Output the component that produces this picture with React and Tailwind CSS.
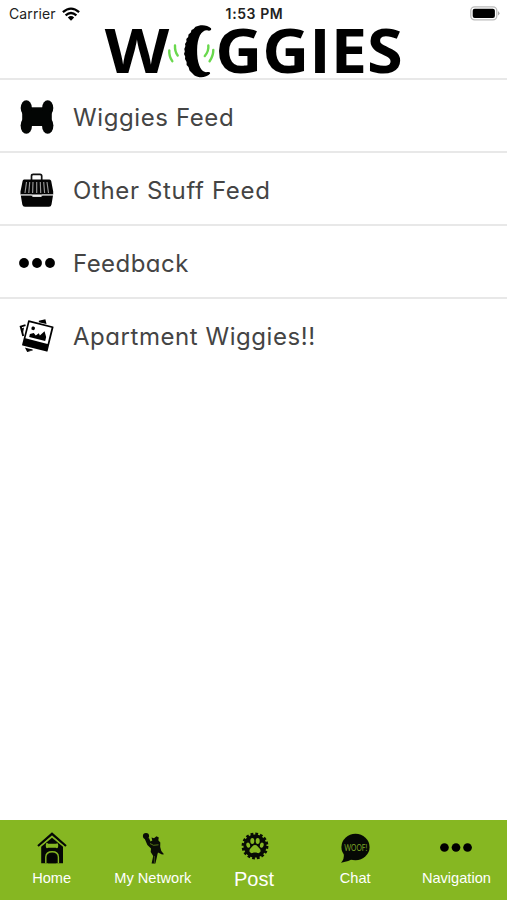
const BoneIcon = () => (
  <svg viewBox="0 0 34 34" className="w-[34px] h-[34px]" fill="#030504">
    <rect x="5" y="7.3" width="24" height="18.7" />
    <ellipse cx="6.3" cy="8" rx="5.6" ry="7.8" />
    <ellipse cx="27.7" cy="8" rx="5.6" ry="7.8" />
    <ellipse cx="6.3" cy="25.6" rx="5.7" ry="8.2" />
    <ellipse cx="27.7" cy="25.6" rx="5.7" ry="8.2" />
    <rect x="2.2" y="11" width="29.6" height="11" rx="3" />
  </svg>
);

const CrateIcon = () => (
  <svg viewBox="0 0 34 34" className="w-[34px] h-[34px]">
    <path d="M11.5 7V3Q11.5 1.3 13.2 1.3H20Q21.7 1.3 21.7 3V7" fill="none" stroke="#111" strokeWidth="1.7" />
    <path d="M4 6.5H29.5Q30.8 6.5 31.2 8L33.2 18.5V21.5H0.5V18.5L2.6 8Q2.9 6.5 4 6.5Z" fill="#050505" />
    <path
      d="M6.5 9L5 20M9.7 9L8.8 20M13 9L12.6 20M16.7 9V20M20.3 9L20.7 20M23.7 9L24.6 20M27 9L28.5 20"
      stroke="#999"
      strokeWidth="1.15"
    />
    <path d="M0.8 22.5H11.5L13 24H21L22.5 22.5H33L31.5 31.5Q31.1 33.7 29 33.7H5Q2.7 33.7 2.3 31.5Z" fill="#050505" />
    <path d="M1 21.7H11.5L13 23.2H20.7L22.2 21.7H33" fill="none" stroke="#bbb" strokeWidth="0.9" />
  </svg>
);

const DotsIcon = ({ className }) => (
  <svg viewBox="0 0 36 10" className={className}>
    <circle cx="5" cy="5" r="4.9" />
    <circle cx="18" cy="5" r="4.9" />
    <circle cx="31" cy="5" r="4.9" />
  </svg>
);

const PhotosIcon = () => (
  <svg viewBox="0 0 36 34" className="w-9 h-[34px]">
    <path d="M6.5 6.2L1.7 7.6L4.2 17" fill="none" stroke="#000" strokeWidth="1.9" />
    <path d="M20 2.6L25.8 1.1L26.5 4Z" stroke="#000" strokeWidth="1.5" />
    <path d="M2.6 9.5L5 8.6L4 14Z" />
    <path d="M7 29.5L13.5 31L8.5 32.3Z" stroke="#000" strokeWidth="1.2" />
    <g transform="translate(9.2 1.2) rotate(14)">
      <rect width="26.3" height="26" rx="0.7" />
      <rect x="1.7" y="1.7" width="22.8" height="16.6" fill="#fff" />
      <circle cx="6.8" cy="6.7" r="1.8" />
      <path d="M5 16V13L8.5 11L11 13L13.5 10L15 12L18.5 6.7L21.5 12V16Z" />
    </g>
  </svg>
);

const HomeIcon = () => (
  <svg viewBox="0 0 30 32" className="w-[30px] h-8">
    <path d="M1 14L15 1.8L29 14" fill="none" stroke="#050805" strokeWidth="2.2" />
    <path d="M4.2 14.7L15 5.8L26 14.7V31.3H4.2Z" fill="#050805" />
    <path d="M2.5 15L15 4.3L27.5 15" fill="none" stroke="#86b722" strokeWidth="0.8" />
    <path
      d="M10.8 11.2Q9 10.5 9 12Q8.5 13.7 9 15.3Q9.6 17 11.2 15.8H18.8Q20.4 17 21 15.3Q21.5 13.7 21 12Q20.4 10.5 19 11.8H11.2Z"
      fill="#86b722"
    />
    <path d="M8.8 31.3V25Q9 19.7 15.2 19.7Q21.2 19.7 21.4 25V31.3" fill="none" stroke="#86b722" strokeWidth="1.4" />
    <path d="M11 31.3V28Q10.4 26.5 11.2 25Q12 22.7 15 22.7Q18.3 22.7 19 25Q19.8 26.5 19.2 28V31.3Z" fill="#030503" />
  </svg>
);

const PersonIcon = () => (
  <svg viewBox="0 0 22 32" className="w-[22px] h-8" fill="#0a0d06">
    <circle cx="4" cy="4.1" r="3.1" />
    <path d="M2.8 7L7 6L8.5 9.6L10.3 8.5L9.5 5.6L12 6.2L14.5 4.3L16.8 5.6L16.3 8.3L18.3 10.6L18.2 15L19.3 19L22 22.3L20 22.6L16 20.5L15.4 22.5L14.8 25.5L13.4 31.4H9.6L11.2 24L8.7 20L9 16.5L5.4 13Z" />
    <path d="M8 11.5L11.5 13.3L16.5 12.8" fill="none" stroke="#86b722" strokeWidth="0.6" />
    <path d="M12.4 24V31" stroke="#86b722" strokeWidth="0.4" />
  </svg>
);

const PostIcon = () => (
  <svg viewBox="0 0 28 28" className="w-7 h-7">
    <circle cx="14" cy="14" r="11.5" fill="#080b05" />
    <circle cx="14" cy="14" r="11.8" fill="none" stroke="#080b05" strokeWidth="3.2" strokeDasharray="2.7 1.93" />
    <g fill="#86b722">
      <ellipse cx="7.2" cy="13.2" rx="1.9" ry="2.6" transform="rotate(-20 7.2 13.2)" />
      <ellipse cx="11.3" cy="9" rx="2" ry="2.9" />
      <ellipse cx="16.7" cy="9" rx="2" ry="2.9" />
      <ellipse cx="20.8" cy="13.2" rx="1.9" ry="2.6" transform="rotate(20 20.8 13.2)" />
      <path d="M14 13C16.2 13 17 15 18.4 16.3C20.8 18.8 19.2 21.8 16.5 21C14.8 20.4 13.2 20.4 11.5 21C8.8 21.8 7.2 18.8 9.6 16.3C11 15 11.8 13 14 13Z" />
    </g>
  </svg>
);

const ChatIcon = () => (
  <svg viewBox="0 0 30 30" className="w-[30px] h-[30px] overflow-visible">
    <ellipse cx="15.5" cy="14" rx="14.1" ry="13.2" fill="#060905" />
    <path d="M3.8 21Q4.5 26 1 29.7Q8 29 12.5 26Z" fill="#060905" />
    <text
      x="4.3"
      y="17.8"
      textLength="23"
      lengthAdjust="spacingAndGlyphs"
      fill="#7da526"
      fontSize="8.6"
      className="font-['Lato',sans-serif]"
    >
      WOOF!
    </text>
  </svg>
);

const Logo = () => (
  <svg viewBox="0 0 300 54" className="w-[300px] h-[54px] overflow-visible">
    <g className="font-['Open_Sans',sans-serif] font-bold" fontSize="60">
      <text x="1.7" y="49" textLength="64.5" lengthAdjust="spacingAndGlyphs">W</text>
      <text x="112.3" y="49" textLength="187.5" lengthAdjust="spacingAndGlyphs">GGIES</text>
    </g>
    <g fill="none" stroke="#69d84d" strokeWidth="2.4" strokeLinecap="round">
      <path d="M66.3 26.5Q65.8 32 69.3 37.2" />
      <path d="M72 21.5Q71.7 27.5 74.7 31.5" />
      <path d="M105.3 21.5Q106 27 101.8 32" />
      <path d="M110.3 26Q110.3 32 106.6 37.2" />
    </g>
    <path d="M108 4.2C104 0.5 97 0.5 92.5 2.8L90.5 5L88.5 6L87.8 8.5L85.5 10.5L85.2 13L83.3 15L83.5 17.5L82 20L82.4 22L81.3 25L81.8 27.5L81 30L82.2 32.5L82 35L83.6 38L83.6 41L85.5 43L86.5 46.5L89 49L91.5 51.5C96.5 54.5 103.5 53.5 107 49.8C107.8 48 105.5 47.5 103 48.3C97 47.5 93.9 38 94.1 26C94.3 14 98 6.3 104 6.3C106.5 7.3 109 6.3 108 4.2Z" />
  </svg>
);

const StatusBar = () => (
  <div className="h-[26px] flex items-center justify-between pl-[9px] pr-[7px] pt-px font-['Inter',sans-serif] text-[#222]">
    <div className="w-[100px] flex items-center gap-[6px]">
      <span className="text-[14px] leading-5 tracking-[0.1px]">Carrier</span>
      <svg viewBox="0 0 18 14" className="w-[18px] h-[14px]">
        <g fill="none" stroke="#000" strokeWidth="2.3">
          <path d="M0.9 5.2Q9 -2 17.1 5.2" />
          <path d="M3.6 8.3Q9 3.6 14.4 8.3" />
        </g>
        <path d="M5.8 10.5Q9 7.7 12.2 10.5L9 13.8Z" />
      </svg>
    </div>
    <span className="w-[62px] text-center text-[14px] leading-4 font-semibold tracking-[0.6px] whitespace-nowrap">
      1:53 PM
    </span>
    <div className="w-[100px] flex justify-end">
      <svg viewBox="0 0 30 15" className="w-[30px] h-[15px]">
        <rect x="0.8" y="0.8" width="26" height="13" rx="3.8" fill="#fff" stroke="#bbb" strokeWidth="1.3" />
        <rect x="2.7" y="2.7" width="22.2" height="9.2" rx="2" />
        <path d="M28 5Q31 7.3 28 9.6Z" fill="#aaa" />
      </svg>
    </div>
  </div>
);

const menuItems = [
  { label: "Wiggies Feed", icon: <BoneIcon />, spacing: "tracking-[0.6px]" },
  { label: "Other Stuff Feed", icon: <CrateIcon />, spacing: "tracking-[0.65px]" },
  { label: "Feedback", icon: <DotsIcon className="w-9 h-[10px]" />, spacing: "tracking-[0.45px]" },
  { label: "Apartment Wiggies!!", icon: <PhotosIcon />, spacing: "tracking-[0.55px]" },
];

const tabs = [
  { label: "Home", icon: <HomeIcon /> },
  { label: "My Network", icon: <PersonIcon /> },
  { label: "Post", icon: <PostIcon />, large: true },
  { label: "Chat", icon: <ChatIcon /> },
  { label: "Navigation", icon: <DotsIcon className="w-8 h-[9px]" /> },
];

const App = () => {
  return (
    <div className="w-[507px] h-[900px] flex flex-col bg-white overflow-hidden">
      <header className="h-[80px] shrink-0 border-b-2 border-[#e8e8e8]">
        <StatusBar />
        <div className="h-[51px] flex justify-center pr-[1px] -mt-[2px]">
          <Logo />
        </div>
      </header>

      <main className="flex-1">
        {menuItems.map((item, i) => (
          <div
            key={item.label}
            className={`h-[73.1px] flex items-center pl-[19px] border-b-2 ${i < 3 ? "border-[#e8e8e8]" : "border-transparent"}`}
          >
            <div className="w-9 mt-[2px] flex justify-center">{item.icon}</div>
            <span
              className={`ml-[18px] mt-[5px] text-[24px] leading-8 font-[430] text-[#444] whitespace-nowrap font-['Inter',sans-serif] [font-feature-settings:'cv11'] ${item.spacing}`}
            >
              {item.label}
            </span>
          </div>
        ))}
      </main>

      <nav className="h-[80.5px] shrink-0 grid grid-cols-5 pl-px bg-[#86b722] font-['Liberation_Sans',sans-serif] text-white">
        {tabs.map((tab) => (
          <div key={tab.label} className="flex flex-col items-center">
            <div className={`h-8 flex items-center ${tab.large ? "mt-[10px] pl-[2px]" : "mt-[12px]"}`}>{tab.icon}</div>
            <span className={tab.large ? "mt-[5px] text-[20px] leading-6" : "mt-1 text-[14.6px] leading-5"}>
              {tab.label}
            </span>
          </div>
        ))}
      </nav>
    </div>
  );
};

export default App;
